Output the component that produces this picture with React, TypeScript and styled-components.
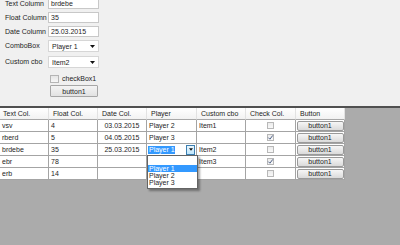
import React from "react";
import styled, { createGlobalStyle, css } from "styled-components";

const GlobalStyle = createGlobalStyle`
  html, body {
    margin: 0;
    padding: 0;
    width: 400px;
    height: 245px;
    overflow: hidden;
    background: #ababab;
  }
  body {
    font-family: "Liberation Sans", Arial, sans-serif;
    font-size: 7px;
    color: #1e1e1e;
  }
`;

interface RowData {
  text: string;
  float: string;
  date: string;
  player: string;
  custom: string;
  checked: boolean;
  editing?: boolean;
}

const rows: RowData[] = [
  { text: "vsv", float: "4", date: "03.03.2015", player: "Player 2", custom: "Item1", checked: false },
  { text: "rberd", float: "5", date: "04.05.2015", player: "Player 3", custom: "", checked: true },
  { text: "brdebe", float: "35", date: "25.03.2015", player: "Player 1", custom: "Item2", checked: false, editing: true },
  { text: "ebr", float: "78", date: "", player: "", custom: "Item3", checked: true },
  { text: "erb", float: "14", date: "", player: "", custom: "", checked: false },
];

const headers = ["Text Col.", "Float Col.", "Date Col.", "Player", "Custom cbo", "Check Col.", "Button"];

const Arrow = ({ size = 5 }: { size?: number }) => (
  <svg width={size} height={3} viewBox="0 0 5 3">
    <path d="M0 0 H5 L2.5 3 Z" fill="#111" />
  </svg>
);

const CheckMark = () => (
  <svg width="7" height="7" viewBox="0 0 7 7">
    <path d="M1.3 3.6 L2.9 5.2 L5.8 1.4" stroke="#3b4f7a" strokeWidth="0.9" fill="none" />
  </svg>
);

const App = () => {
  return (
    <Page>
      <GlobalStyle />
      <FormPanel>
        <FormGrid>
          <Label>Text Column</Label>
          <TextBox>brdebe</TextBox>
          <Label>Float Column</Label>
          <TextBox>35</TextBox>
          <Label>Date Column</Label>
          <TextBox>25.03.2015</TextBox>
          <Label>ComboBox</Label>
          <ComboBox>
            <span>Player 1</span>
            <Arrow />
          </ComboBox>
          <Label>Custom cbo</Label>
          <ComboBox>
            <span>Item2</span>
            <Arrow />
          </ComboBox>
          <span />
          <CheckRow>
            <CheckBox />
            <span>checkBox1</span>
          </CheckRow>
          <span />
          <FormButton>button1</FormButton>
        </FormGrid>
      </FormPanel>
      <Splitter />
      <GridArea>
        <Table>
          {headers.map((h) => (
            <HeaderCell key={h}>{h}</HeaderCell>
          ))}
          {rows.map((r) => (
            <React.Fragment key={r.text}>
              <Cell>{r.text}</Cell>
              <Cell>{r.float}</Cell>
              <Cell align="center">{r.date}</Cell>
              {r.editing ? (
                <Cell editing>
                  <EditCombo>
                    <Selected>{r.player}</Selected>
                    <DropButton>
                      <Arrow size={4} />
                    </DropButton>
                  </EditCombo>
                  <DropList>
                    <DropItem />
                    <DropItem active>Player 1</DropItem>
                    <DropItem>Player 2</DropItem>
                    <DropItem>Player 3</DropItem>
                  </DropList>
                </Cell>
              ) : (
                <Cell>{r.player}</Cell>
              )}
              <Cell>{r.custom}</Cell>
              <Cell align="center">
                <GridCheck>{r.checked && <CheckMark />}</GridCheck>
              </Cell>
              <Cell align="center">
                <GridButton>button1</GridButton>
              </Cell>
            </React.Fragment>
          ))}
        </Table>
      </GridArea>
    </Page>
  );
};

export default App;

const Page = styled.div`
  width: 400px;
  height: 245px;
  display: flex;
  flex-direction: column;
`;

const FormPanel = styled.div`
  height: 106px;
  background: #f0f0f0;
  padding-left: 5px;
  box-sizing: border-box;
  overflow: hidden;
`;

const FormGrid = styled.div`
  display: grid;
  grid-template-columns: 43px 51px;
  grid-template-rows: 14px 14px 14px 16px 16px 13px 13px;
  margin-top: -2px;
`;

const Label = styled.div`
  height: 11px;
  line-height: 11px;
  white-space: nowrap;
  display: flex;
  align-items: center;
`;

const fieldBox = css`
  box-sizing: border-box;
  background: #fff;
  border: 1px solid #c8c8c8;
  display: flex;
  align-items: center;
  white-space: nowrap;
`;

const TextBox = styled.div`
  ${fieldBox};
  height: 11px;
  padding-left: 2px;
`;

const ComboBox = styled.div`
  ${fieldBox};
  height: 12px;
  padding: 0 3px 0 3px;
  justify-content: space-between;
  border-color: #d6d6d6;
`;

const CheckRow = styled.div`
  display: flex;
  align-items: center;
  gap: 3px;
  margin-left: 2px;
  margin-top: 2px;
  height: 9px;
  white-space: nowrap;
`;

const CheckBox = styled.div`
  width: 9px;
  height: 8px;
  box-sizing: border-box;
  border: 1px solid #b5b5b5;
  background: linear-gradient(#e6e6e6, #f7f7f7);
`;

const FormButton = styled.div`
  margin-left: 2px;
  width: 48px;
  height: 12px;
  box-sizing: border-box;
  border: 1px solid #a6a6a6;
  border-radius: 1px;
  background: linear-gradient(#f4f4f4, #e2e2e2);
  display: flex;
  align-items: center;
  justify-content: center;
`;

const Splitter = styled.div`
  height: 2px;
  background: #505050;
`;

const GridArea = styled.div`
  flex: 1;
  background: #ababab;
`;

const Table = styled.div`
  display: grid;
  grid-template-columns: 49px 49px 49px 50px 49px 50px 49px;
  width: 345px;
  background: #fff;
`;

const HeaderCell = styled.div`
  height: 12px;
  box-sizing: border-box;
  border-bottom: 1px solid #a8a8a8;
  border-right: 1px solid #e2e2e2;
  background: linear-gradient(#ffffff, #f2f2f2);
  padding-left: 4px;
  line-height: 11px;
  white-space: nowrap;
  overflow: hidden;
  &:first-child {
    padding-left: 3px;
  }
`;

const Cell = styled.div<{ align?: "left" | "center"; editing?: boolean }>`
  position: relative;
  height: 12px;
  box-sizing: border-box;
  border-bottom: 1px solid #a4a4a4;
  border-right: 1px solid #a4a4a4;
  padding-left: ${({ align }) => (align === "center" ? "0" : "2px")};
  display: flex;
  align-items: center;
  justify-content: ${({ align }) => (align === "center" ? "center" : "flex-start")};
  white-space: nowrap;
  overflow: ${({ editing }) => (editing ? "visible" : "hidden")};
  z-index: ${({ editing }) => (editing ? 2 : "auto")};
`;

const EditCombo = styled.div`
  position: absolute;
  inset: 0 0 0 0;
  background: #fff;
  display: flex;
  align-items: center;
  padding-left: 1px;
`;

const Selected = styled.span`
  background: #3399ff;
  color: #fff;
  padding: 0 1px;
  width: 25px;
  line-height: 8px;
`;

const DropButton = styled.div`
  margin-left: auto;
  margin-right: 1px;
  width: 9px;
  height: 10px;
  box-sizing: border-box;
  border: 1px solid #3c7fb1;
  background: linear-gradient(#eaf6fd, #bee6fd);
  display: flex;
  align-items: center;
  justify-content: center;
`;

const DropList = styled.div`
  position: absolute;
  left: 0;
  top: 11px;
  width: 51px;
  box-sizing: border-box;
  border: 1px solid #646464;
  background: #fff;
  padding-bottom: 2px;
  box-shadow: 2px 2px 2px rgba(0, 0, 0, 0.35);
`;

const DropItem = styled.div<{ active?: boolean }>`
  height: 7px;
  line-height: 7px;
  padding-left: 1px;
  &:first-child {
    height: 9px;
  }
  ${({ active }) =>
    active &&
    css`
      background: #3399ff;
      color: #fff;
    `}
`;

const GridCheck = styled.div`
  width: 7px;
  height: 7px;
  box-sizing: border-box;
  border: 1px solid #b8b8b8;
  background: linear-gradient(#ececec, #f8f8f8);
  display: flex;
  align-items: center;
  justify-content: center;
  svg {
    flex: none;
  }
`;

const GridButton = styled.div`
  width: 47px;
  height: 10px;
  box-sizing: border-box;
  border: 1px solid #9a9a9a;
  border-radius: 2px;
  background: linear-gradient(#f6f6f6, #dadada);
  display: flex;
  align-items: center;
  justify-content: center;
`;
